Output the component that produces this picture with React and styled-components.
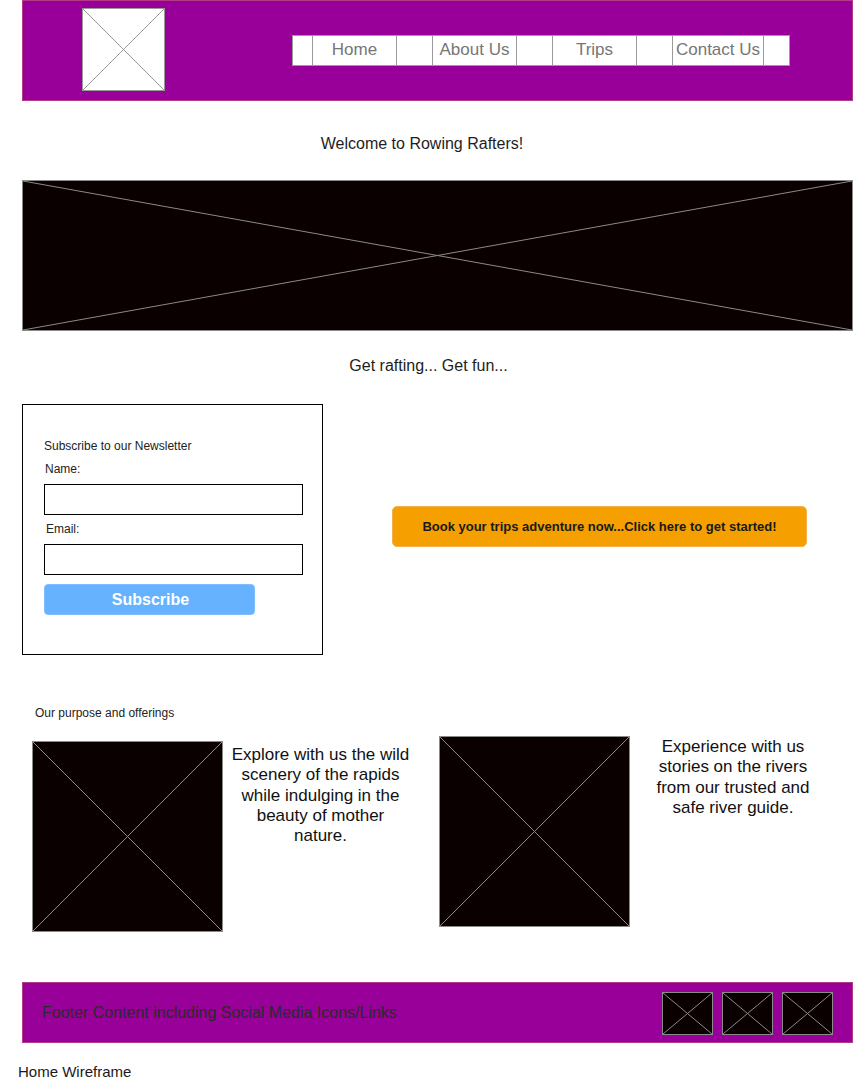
import React from "react";
import styled, { createGlobalStyle } from "styled-components";

const Global = createGlobalStyle`
  html, body { margin: 0; padding: 0; background: #fff; }
  body { font-family: "Liberation Sans", Arial, sans-serif; color: #222; }
  * { box-sizing: border-box; }
`;

const Page = styled.div`
  width: 853px;
  position: relative;
`;

const Header = styled.header`
  margin-left: 22px;
  width: 831px;
  height: 101px;
  background: #990099;
  border: 1px solid #b23a86;
  display: flex;
  align-items: center;
`;

const Placeholder = styled.div`
  width: ${(p) => p.$w}px;
  height: ${(p) => p.$h}px;
  background: ${(p) => (p.$dark ? "#0a0000" : "#fff")};
  border: 1px solid ${(p) => (p.$dark ? "#8a8a8a" : "#9a9a9a")};
  flex-shrink: 0;
  svg { display: block; width: 100%; height: 100%; }
`;

const Logo = styled(Placeholder)`
  margin-left: 59px;
  margin-top: -2px;
`;

const Nav = styled.nav`
  margin-left: 127px;
  display: flex;
  height: 31px;
  background: #fff;
  border: 1px solid #9a9a9a;
  margin-top: -1px;
`;

const NavCell = styled.div`
  width: ${(p) => p.$w}px;
  border-left: ${(p) => (p.$first ? "none" : "1px solid #9a9a9a")};
  display: flex;
  align-items: center;
  justify-content: center;
  font-size: 17px;
  color: #767676;
  white-space: nowrap;
`;

const Tagline = styled.p`
  margin: ${(p) => p.$mt}px 0 0;
  height: 20px;
  line-height: 20px;
  font-size: 16px;
  color: #1e1e1e;
  text-align: center;
  padding-left: ${(p) => p.$pl || 0}px;
  padding-right: ${(p) => p.$pr || 0}px;
`;

const Hero = styled(Placeholder)`
  margin-left: 22px;
  margin-top: 26px;
`;

const MiddleRow = styled.section`
  display: flex;
  align-items: center;
  margin-top: 28px;
`;

const FormBox = styled.div`
  margin-left: 22px;
  width: 301px;
  height: 251px;
  border: 1px solid #000;
  padding: 33px 0 0 21px;
  display: flex;
  flex-direction: column;
`;

const FormTitle = styled.div`
  font-size: 12px;
  line-height: 16px;
  color: #222;
`;

const Label = styled.label`
  font-size: 12px;
  line-height: 14px;
  color: #222;
  margin-top: ${(p) => p.$mt}px;
  margin-left: ${(p) => p.$ml}px;
`;

const Input = styled.div`
  width: 259px;
  height: 31px;
  border: 1px solid #000;
  margin-top: 8px;
  background: #fff;
`;

const SubscribeButton = styled.button`
  margin-top: 9px;
  width: 211px;
  height: 31px;
  border: 1px solid #7fbfff;
  border-radius: 4px;
  background: #66b2ff;
  color: #fff;
  font-family: "Liberation Sans", Arial, sans-serif;
  font-weight: bold;
  font-size: 16px;
  padding: 0 0 0 2px;
`;

const BookButton = styled.button`
  margin-left: 69px;
  margin-bottom: 6px;
  width: 415px;
  height: 41px;
  border: 1px solid #f2b04a;
  border-radius: 5px;
  background: #f59f00;
  color: #1a1a1a;
  font-family: "Liberation Sans", Arial, sans-serif;
  font-weight: bold;
  font-size: 13px;
  padding: 0;
`;

const SectionTitle = styled.div`
  margin: 50px 0 0 35px;
  font-size: 12px;
  line-height: 16px;
  color: #222;
`;

const Cards = styled.section`
  display: flex;
  align-items: flex-start;
  margin-top: 15px;
`;

const CardImage = styled(Placeholder)`
  margin-left: ${(p) => p.$ml}px;
  margin-top: ${(p) => p.$mt}px;
`;

const CardText = styled.p`
  margin: ${(p) => p.$mt}px 0 0 ${(p) => p.$ml}px;
  width: ${(p) => p.$w}px;
  font-size: 17px;
  line-height: 20.3px;
  text-align: center;
  color: #111;
`;

const Footer = styled.footer`
  margin: 50px 0 0 22px;
  width: 831px;
  height: 61px;
  background: #990099;
  border: 1px solid #b23a86;
  display: flex;
  align-items: center;
  padding: 0 20px 0 19px;
`;

const FooterText = styled.div`
  font-size: 16px;
  color: #2a2a2a;
  flex: 1;
`;

const Socials = styled.div`
  display: flex;
  gap: 9px;
  margin-right: -1px;
  margin-top: 2px;
`;

const Caption = styled.div`
  margin: 20px 0 0 18px;
  font-size: 15px;
  line-height: 18px;
  color: #1a1a1a;
  padding-bottom: 6px;
`;

const Cross = ({ color }) => (
  <svg viewBox="0 0 100 100" preserveAspectRatio="none">
    <line x1="0" y1="0" x2="100" y2="100" stroke={color} strokeWidth="1" vectorEffect="non-scaling-stroke" />
    <line x1="100" y1="0" x2="0" y2="100" stroke={color} strokeWidth="1" vectorEffect="non-scaling-stroke" />
  </svg>
);

const navItems = [
  { w: 19, label: "" },
  { w: 84, label: "Home" },
  { w: 36, label: "" },
  { w: 84, label: "About Us" },
  { w: 36, label: "" },
  { w: 84, label: "Trips" },
  { w: 36, label: "" },
  { w: 91, label: "Contact Us" },
  { w: 26, label: "" },
];

export default function App() {
  return (
    <Page>
      <Global />
      <Header>
        <Logo $w={83} $h={83}>
          <Cross color="#9a9a9a" />
        </Logo>
        <Nav>
          {navItems.map((n, i) => (
            <NavCell key={i} $w={n.w} $first={i === 0}>
              {n.label}
            </NavCell>
          ))}
        </Nav>
      </Header>

      <Tagline $mt={33} $pr={9}>Welcome to Rowing Rafters!</Tagline>

      <Hero $dark $w={831} $h={151}>
        <Cross color="#8a8a8a" />
      </Hero>

      <Tagline $mt={25} $pl={4}>Get rafting... Get fun...</Tagline>

      <MiddleRow>
        <FormBox>
          <FormTitle>Subscribe to our Newsletter</FormTitle>
          <Label $mt={8} $ml={1}>Name:</Label>
          <Input />
          <Label $mt={7} $ml={2}>Email:</Label>
          <Input />
          <SubscribeButton>Subscribe</SubscribeButton>
        </FormBox>
        <BookButton>Book your trips adventure now...Click here to get started!</BookButton>
      </MiddleRow>

      <SectionTitle>Our purpose and offerings</SectionTitle>

      <Cards>
        <CardImage $dark $w={191} $h={191} $ml={32} $mt={5}>
          <Cross color="#8a8a8a" />
        </CardImage>
        <CardText $w={181} $ml={7} $mt={9}>
          Explore with us the wild scenery of the rapids while indulging in the beauty of mother nature.
        </CardText>
        <CardImage $dark $w={191} $h={191} $ml={28} $mt={0}>
          <Cross color="#8a8a8a" />
        </CardImage>
        <CardText $w={170} $ml={18} $mt={1}>
          Experience with us stories on the rivers from our trusted and safe river guide.
        </CardText>
      </Cards>

      <Footer>
        <FooterText>Footer Content including Social Media Icons/Links</FooterText>
        <Socials>
          {[0, 1, 2].map((i) => (
            <Placeholder key={i} $dark $w={51} $h={43}>
              <Cross color="#8a8a8a" />
            </Placeholder>
          ))}
        </Socials>
      </Footer>

      <Caption>Home Wireframe</Caption>
    </Page>
  );
}
